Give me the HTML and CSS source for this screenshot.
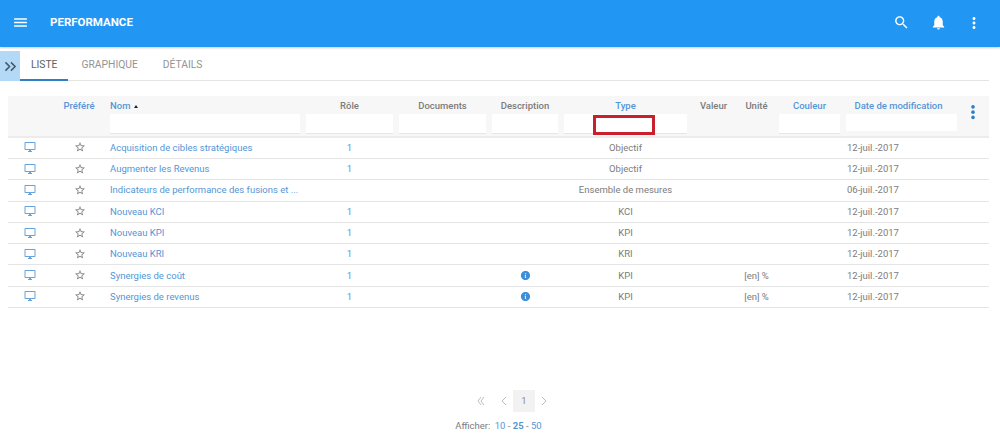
FILE: index.html
```html
<!DOCTYPE html>
<html lang="fr">
<head>
<meta charset="utf-8">
<title>Performance</title>
<link rel="stylesheet" href="styles.css">
</head>
<body>
<svg class="sprites" aria-hidden="true">
  <symbol id="i-desktop" viewBox="0 0 24 24"><path d="M21 2H3c-1.1 0-2 .9-2 2v12c0 1.1.9 2 2 2h7v2H8v2h8v-2h-2v-2h7c1.1 0 2-.9 2-2V4c0-1.1-.9-2-2-2zm0 14H3V4h18v12z"/></symbol>
  <symbol id="i-star" viewBox="0 0 24 24"><path d="M22 9.24l-7.19-.62L12 2 9.19 8.63 2 9.24l5.46 4.73L5.82 21 12 17.27 18.18 21l-1.63-7.03L22 9.24zM12 15.4l-3.76 2.27 1-4.28-3.32-2.88 4.38-.38L12 6.1l1.71 4.04 4.38.38-3.32 2.88 1 4.28L12 15.4z"/></symbol>
  <symbol id="i-info" viewBox="0 0 24 24"><path d="M12 2C6.48 2 2 6.48 2 12s4.48 10 10 10 10-4.48 10-10S17.52 2 12 2zm1.6 15.5h-3.2v-1.200h.8v-4h-.8v-1.200h2.400v5.200h.8zM13.200 9.400h-2.400V7h2.400z"/></symbol>
</svg>

<header class="appbar">
  <svg class="bar-icon menu" viewBox="0 0 24 24"><path d="M3 18h18v-2H3v2zm0-5h18v-2H3v2zm0-7v2h18V6H3z"/></svg>
  <span class="title">PERFORMANCE</span>
  <span class="spacer"></span>
  <svg class="bar-icon search" viewBox="0 0 24 24"><path d="M15.5 14h-.79l-.28-.27C15.41 12.59 16 11.11 16 9.5 16 5.91 13.09 3 9.5 3S3 5.91 3 9.5 5.91 16 9.5 16c1.61 0 3.09-.59 4.23-1.57l.27.28v.79l5 4.99L20.49 19l-4.99-5zm-6 0C7.01 14 5 11.99 5 9.5S7.01 5 9.5 5 14 7.01 14 9.5 11.99 14 9.5 14z"/></svg>
  <svg class="bar-icon bell" viewBox="0 0 24 24"><path d="M12 22c1.1 0 2-.9 2-2h-4c0 1.1.89 2 2 2zm6-6v-5c0-3.07-1.64-5.64-4.5-6.32V4c0-.83-.67-1.5-1.5-1.5s-1.5.67-1.5 1.5v.68C7.63 5.36 6 7.92 6 11v5l-2 2v1h16v-1l-2-2z"/></svg>
  <svg class="bar-icon more" viewBox="0 0 24 24"><path d="M12 8c1.1 0 2-.9 2-2s-.9-2-2-2-2 .9-2 2 .9 2 2 2zm0 2c-1.1 0-2 .9-2 2s.9 2 2 2 2-.9 2-2-.9-2-2-2zm0 6c-1.1 0-2 .9-2 2s.9 2 2 2 2-.9 2-2-.9-2-2-2z"/></svg>
</header>

<nav class="tabs">
  <button class="drawer-toggle"><svg viewBox="0 0 14 12"><path d="M1.500 1.500 6 6l-4.500 4.500M7.500 1.500 12 6l-4.500 4.500"/></svg></button>
  <span class="tab active">LISTE</span>
  <span class="tab">GRAPHIQUE</span>
  <span class="tab">DÉTAILS</span>
</nav>

<main class="table">
  <div class="row head">
    <div class="cell"></div>
    <div class="cell center"><span class="sort nudge-sm">Préféré</span></div>
    <div class="cell filter nom"><span class="sort">Nom <i class="caret"></i></span><span class="input"></span></div>
    <div class="cell center filter"><span>Rôle</span><span class="input"></span></div>
    <div class="cell center filter"><span>Documents</span><span class="input"></span></div>
    <div class="cell center filter"><span>Description</span><span class="input"></span></div>
    <div class="cell center filter type"><span class="sort">Type</span><span class="input"></span><span class="highlight"></span></div>
    <div class="cell center"><span>Valeur</span></div>
    <div class="cell center"><span>Unité</span></div>
    <div class="cell center filter"><span class="sort">Couleur</span><span class="input"></span></div>
    <div class="cell center filter"><span class="sort nudge-lg">Date de modification</span><span class="input short"></span></div>
    <div class="cell center menu-cell"><svg class="col-menu" viewBox="0 0 8 22"><circle cx="4" cy="3.500" r="2.400"/><circle cx="4" cy="10.500" r="2.400"/><circle cx="4" cy="17.500" r="2.400"/></svg></div>
  </div>

  <div class="row"><div class="cell center"><svg class="ic blue"><use href="#i-desktop"/></svg></div><div class="cell center"><svg class="ic"><use href="#i-star"/></svg></div><div class="cell name"><a>Acquisition de cibles stratégiques</a></div><div class="cell center"><a>1</a></div><div class="cell"></div><div class="cell"></div><div class="cell center">Objectif</div><div class="cell"></div><div class="cell"></div><div class="cell"></div><div class="cell date">12-juil.-2017</div><div class="cell"></div></div>
  <div class="row"><div class="cell center"><svg class="ic blue"><use href="#i-desktop"/></svg></div><div class="cell center"><svg class="ic"><use href="#i-star"/></svg></div><div class="cell name"><a>Augmenter les Revenus</a></div><div class="cell center"><a>1</a></div><div class="cell"></div><div class="cell"></div><div class="cell center">Objectif</div><div class="cell"></div><div class="cell"></div><div class="cell"></div><div class="cell date">12-juil.-2017</div><div class="cell"></div></div>
  <div class="row"><div class="cell center"><svg class="ic blue"><use href="#i-desktop"/></svg></div><div class="cell center"><svg class="ic"><use href="#i-star"/></svg></div><div class="cell name"><a>Indicateurs de performance des fusions et ...</a></div><div class="cell"></div><div class="cell"></div><div class="cell"></div><div class="cell center">Ensemble de mesures</div><div class="cell"></div><div class="cell"></div><div class="cell"></div><div class="cell date">06-juil.-2017</div><div class="cell"></div></div>
  <div class="row"><div class="cell center"><svg class="ic blue"><use href="#i-desktop"/></svg></div><div class="cell center"><svg class="ic"><use href="#i-star"/></svg></div><div class="cell name"><a>Nouveau KCI</a></div><div class="cell center"><a>1</a></div><div class="cell"></div><div class="cell"></div><div class="cell center">KCI</div><div class="cell"></div><div class="cell"></div><div class="cell"></div><div class="cell date">12-juil.-2017</div><div class="cell"></div></div>
  <div class="row"><div class="cell center"><svg class="ic blue"><use href="#i-desktop"/></svg></div><div class="cell center"><svg class="ic"><use href="#i-star"/></svg></div><div class="cell name"><a>Nouveau KPI</a></div><div class="cell center"><a>1</a></div><div class="cell"></div><div class="cell"></div><div class="cell center">KPI</div><div class="cell"></div><div class="cell"></div><div class="cell"></div><div class="cell date">12-juil.-2017</div><div class="cell"></div></div>
  <div class="row"><div class="cell center"><svg class="ic blue"><use href="#i-desktop"/></svg></div><div class="cell center"><svg class="ic"><use href="#i-star"/></svg></div><div class="cell name"><a>Nouveau KRI</a></div><div class="cell center"><a>1</a></div><div class="cell"></div><div class="cell"></div><div class="cell center">KRI</div><div class="cell"></div><div class="cell"></div><div class="cell"></div><div class="cell date">12-juil.-2017</div><div class="cell"></div></div>
  <div class="row"><div class="cell center"><svg class="ic blue"><use href="#i-desktop"/></svg></div><div class="cell center"><svg class="ic"><use href="#i-star"/></svg></div><div class="cell name"><a>Synergies de coût</a></div><div class="cell center"><a>1</a></div><div class="cell"></div><div class="cell center"><svg class="ic solid"><use href="#i-info"/></svg></div><div class="cell center">KPI</div><div class="cell"></div><div class="cell center">[en] %</div><div class="cell"></div><div class="cell date">12-juil.-2017</div><div class="cell"></div></div>
  <div class="row"><div class="cell center"><svg class="ic blue"><use href="#i-desktop"/></svg></div><div class="cell center"><svg class="ic"><use href="#i-star"/></svg></div><div class="cell name"><a>Synergies de revenus</a></div><div class="cell center"><a>1</a></div><div class="cell"></div><div class="cell center"><svg class="ic solid"><use href="#i-info"/></svg></div><div class="cell center">KPI</div><div class="cell"></div><div class="cell center">[en] %</div><div class="cell"></div><div class="cell date">12-juil.-2017</div><div class="cell"></div></div>
</main>

<footer class="pager">
  <div class="pages">
    <span class="pg"><svg class="chev" viewBox="0 0 10 10"><path d="M5 1 2 5l3 4M8 1 5 5l3 4"/></svg></span>
    <span class="pg prev"><svg class="chev" viewBox="0 0 10 10"><path d="M8 1 4 5l4 4"/></svg></span>
    <span class="pg current">1</span>
    <span class="pg"><svg class="chev" viewBox="0 0 10 10"><path d="M1 1l4 4-4 4"/></svg></span>
  </div>
  <div class="sizes">Afficher: <a class="first-size">10</a> - <a class="on">25</a> - <a>50</a></div>
</footer>
</body>
</html>
```

FILE: styles.css
```css
* { box-sizing: border-box; }

html, body { height: 100%; }

body {
  margin: 0;
  background: #fff;
  color: #7c7c7c;
  font-family: Roboto, "Liberation Sans", sans-serif;
  font-size: 9.500px;
  overflow: hidden;
}

.sprites { display: none; }

a { color: #5496d6; }

.appbar {
  display: flex;
  align-items: center;
  height: 47px;
  padding: 0 17px 2px 12px;
  background: #2196f3;
  box-shadow: 0 1px 2px rgba(0, 0, 0, .2);
}

.bar-icon { fill: #fff; }
.menu { width: 17px; height: 17px; margin-bottom: 1px; }

.title {
  margin-left: 21px;
  margin-bottom: 1px;
  color: #fff;
  font-size: 11.500px;
  font-weight: 700;
}

.spacer { flex: 1; }

.search { width: 17px; height: 17px; }
.bell { width: 17px; height: 17px; margin-left: 20px; }
.more { width: 18px; height: 18px; margin-left: 18px; }

.tabs {
  display: flex;
  height: 30px;
  margin: 4px 11px 0 0;
  border-bottom: 1px solid #e4e4e4;
  font-size: 10.300px;
}

.drawer-toggle {
  width: 20px;
  height: 30px;
  padding: 0;
  border: 0;
  background: #b3d9f7;
}

.drawer-toggle svg {
  display: block;
  width: 13px;
  height: 11px;
  margin: 0 auto;
  fill: none;
  stroke: #44596b;
  stroke-width: 1.700;
}

.tab {
  padding: 0 12.500px;
  line-height: 27px;
  color: #949494;
}

.tab.active {
  width: 48px;
  padding: 0 0 0 11px;
  color: #616161;
  border-bottom: 2px solid #2e7fc4;
  height: 30px;
}

.tab.active + .tab { margin-left: 1px; }

.table { margin: 15px 11px 0 8px; }

.row {
  display: grid;
  grid-template-columns: 44px 56px 195px 93px 93px 72px 129px 47px 39px 67px 117px 29px;
  height: 21.300px;
  padding-bottom: 1px;
  border-bottom: 1px solid #e4e4e4;
  align-items: center;
}

.row.head {
  height: 41.700px;
  align-items: start;
  padding: 4px 0 0;
  background: #f7f7f7;
  border-bottom: 2px solid #ececec;
  font-weight: 500;
}

.cell { min-width: 0; }
.center { text-align: center; }
.name { padding-left: 2px; }
.nom { padding-left: 2px; }
.date { padding-left: 4px; }

.filter { display: flex; flex-direction: column; gap: 3px; }
.filter.center { align-items: center; }

.sort { color: #5496d6; }

.nudge-sm { padding-right: 2px; }
.nudge-lg { padding-right: 6px; }
.menu-cell { padding-right: 4px; }

.caret {
  display: inline-block;
  width: 0;
  height: 0;
  margin-left: 1px;
  vertical-align: 1px;
  border: 2.500px solid transparent;
  border-top: 0;
  border-bottom: 3px solid #222;
}

.input {
  display: block;
  width: calc(100% - 6px);
  height: 20px;
  background: #fff;
  border-bottom: 1px solid #e6e6e6;
}

.nom .input { width: 190px; }
.input.short { height: 17px; border-bottom: 0; }

.type { position: relative; }

.highlight {
  position: absolute;
  left: 32px;
  top: 15px;
  width: 62px;
  height: 20px;
  border: 3px solid #c9202e;
}

.col-menu { width: 6px; height: 17px; margin-top: 4px; fill: #2e7fc4; }

.ic { display: block; width: 12px; height: 12px; margin: 0 auto; fill: #808080; }
.ic.blue { fill: #6aa3da; }
.ic.solid { width: 11px; height: 11px; fill: #3d8fd8; }

.pager {
  margin-top: 82px;
  display: flex;
  flex-direction: column;
  align-items: center;
  gap: 8px;
}

.pages {
  display: flex;
  align-items: center;
  padding-left: 27px;
}

.pg { width: 22px; text-align: center; }
.prev { width: 21px; }

.chev {
  display: block;
  width: 10px;
  height: 10px;
  margin: 0 auto;
  fill: none;
  stroke: #bdbdbd;
  stroke-width: 1;
}

.current {
  height: 22px;
  line-height: 22px;
  background: #f2f2f2;
  color: #8a8a8a;
}

.sizes { padding-right: 3px; }
.first-size { margin-left: 2px; }
.sizes .on { font-weight: 700; }
```
